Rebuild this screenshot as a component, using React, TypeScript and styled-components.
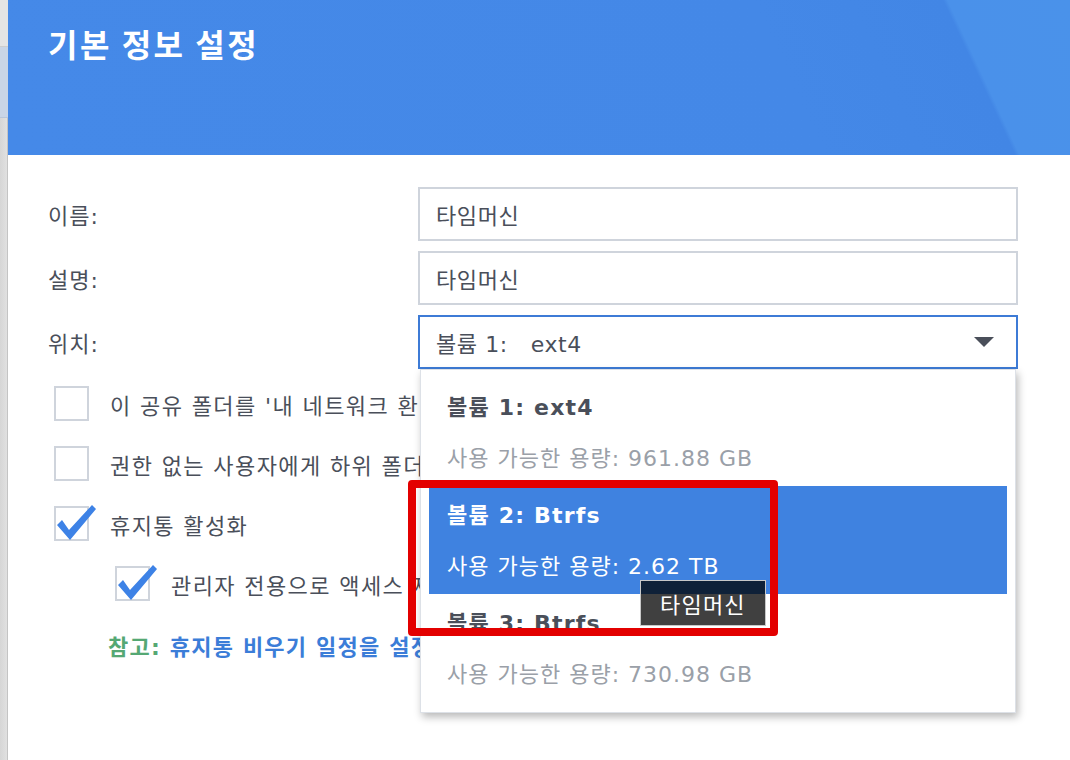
import * as React from 'react';
import styled, { createGlobalStyle } from 'styled-components';

// latin glyphs come from DejaVu (Verdana widths), hangul falls through to Noto CJK
const fontStack = '"DejaVu Sans", "Noto Sans CJK KR", sans-serif';
const titleStack = '"Noto Sans CJK KR", "Noto Sans", sans-serif';
const textColor = '#4a4f5a';
const borderColor = '#cfd4dc';
const blue = '#3f82e0';

const GlobalStyle = createGlobalStyle`
  html, body {
    margin: 0;
    padding: 0;
    background: #ffffff;
  }
  body {
    font-family: ${fontStack};
    color: ${textColor};
    letter-spacing: 1.4px;
  }
`;

const Page = styled.div`
  position: relative;
  display: flex;
  width: 1070px;
  height: 760px;
  overflow: hidden;
`;

// the app window peeking out behind the dialog
const BackStrip = styled.div`
  flex: 0 0 8px;
  display: flex;
  flex-direction: column;
  background: linear-gradient(90deg, #d6d6d6, #e2e2e2);
  box-shadow: inset -1px 0 0 #c4c4c4;
`;

const StripTop = styled.div`
  height: 46px;
  background: #e4e4e4;
  border-bottom: 1px solid #cdcdcd;
`;

const StripTab = styled.div`
  height: 70px;
  background: #c9d5e6;
  border-bottom: 1px solid #b8c6da;
`;

const Dialog = styled.div`
  flex: 1;
  display: flex;
  flex-direction: column;
  background: #ffffff;
`;

const Header = styled.div`
  height: 155px;
  box-sizing: border-box;
  padding: 19px 0 0 40px;
  background: linear-gradient(
    65deg,
    #4589e8 0%,
    #4488e7 72%,
    #4286e5 88.8%,
    #4a91ea 89.2%,
    #4a92ea 100%
  );
`;

const Title = styled.h1`
  margin: 0;
  font-family: ${titleStack};
  font-size: 32px;
  line-height: 48px;
  font-weight: 700;
  color: #ffffff;
  letter-spacing: 2.5px;
`;

const Body = styled.div`
  padding: 32px 52px 0 40px;
`;

const FormGrid = styled.div`
  display: grid;
  grid-template-columns: 370px 600px;
  row-gap: 10px;
  align-items: center;
`;

const Label = styled.div`
  font-size: 22px;
  letter-spacing: 1px;
  color: ${textColor};
`;

const Field = styled.div<{ $focused?: boolean }>`
  position: relative;
  height: 54px;
  box-sizing: border-box;
  display: flex;
  align-items: center;
  padding: 0 16px;
  border: 2px solid ${p => (p.$focused ? '#3d7bd6' : borderColor)};
  background: #ffffff;
  font-size: 22px;
  letter-spacing: 0.6px;
  color: ${textColor};
  white-space: pre;
`;

const Arrow = styled.span`
  margin-left: auto;
  margin-right: 6px;
  width: 0;
  height: 0;
  border-left: 10px solid transparent;
  border-right: 10px solid transparent;
  border-top: 10px solid #4a4f5a;
`;

const Dropdown = styled.div`
  position: absolute;
  top: calc(100% + 2px);
  left: 0;
  width: 596px;
  box-sizing: border-box;
  padding: 8px 8px 10px;
  background: #ffffff;
  border: 1px solid #dde1e7;
  box-shadow: 2px 4px 8px rgba(0, 0, 0, 0.28);
  white-space: normal;
  letter-spacing: 1.2px;
  z-index: 10;
`;

const Option = styled.div<{ $active?: boolean }>`
  position: relative;
  height: 108px;
  box-sizing: border-box;
  padding: 14px 18px 0;
  background: ${p => (p.$active ? blue : 'transparent')};
`;

const OptionTitle = styled.div<{ $active?: boolean }>`
  font-size: 22px;
  font-weight: 700;
  line-height: 32px;
  color: ${p => (p.$active ? '#ffffff' : textColor)};
`;

const OptionSub = styled.div<{ $active?: boolean }>`
  margin-top: 19px;
  font-size: 22px;
  line-height: 32px;
  letter-spacing: 1px;
  color: ${p => (p.$active ? '#ffffff' : '#9aa0a8')};
`;

const Tooltip = styled.div`
  position: absolute;
  left: 211px;
  top: 94px;
  z-index: 2;
  padding: 0 19px;
  height: 46px;
  box-sizing: border-box;
  display: flex;
  align-items: center;
  background: rgba(0, 0, 0, 0.75);
  border: 1px solid #c8c8c8;
  font-size: 22px;
  color: #ffffff;
`;

const Checks = styled.div`
  display: flex;
  flex-direction: column;
  gap: 25px;
  margin: 17px 0 0 6px;
`;

const CheckRow = styled.div<{ $indent?: boolean }>`
  display: flex;
  align-items: center;
  gap: 21px;
  height: 35px;
  margin-left: ${p => (p.$indent ? '61px' : '0')};
  font-size: 22px;
  letter-spacing: 1.4px;
  color: ${textColor};
  white-space: nowrap;
`;

const Box = styled.span`
  position: relative;
  flex: 0 0 35px;
  height: 35px;
  box-sizing: border-box;
  border: 2px solid ${borderColor};
  background: #ffffff;
`;

const Tick = styled.svg`
  position: absolute;
  left: -2px;
  top: -4px;
  overflow: visible;
`;

const Note = styled.div`
  margin: 28px 0 0 60px;
  font-size: 22px;
  font-weight: 700;
  letter-spacing: 1.2px;
  white-space: nowrap;
`;

const NoteLabel = styled.span`
  color: #55a874;
`;

const NoteLink = styled.span`
  color: #3b7dd8;
`;

const Highlight = styled.div`
  position: absolute;
  left: 408px;
  top: 480px;
  width: 370px;
  height: 156px;
  box-sizing: border-box;
  border: 8px solid #e30000;
  border-radius: 4px;
  z-index: 20;
  pointer-events: none;
`;

const CheckBox = ({ checked }: { checked?: boolean }) => (
  <Box>
    {checked && (
      <Tick width="42" height="38" viewBox="0 0 42 38">
        <polygon points="3,21 8,16 15,26 38,1 42,5 16,36" fill="#3d82e6" />
      </Tick>
    )}
  </Box>
);

const volumes = [
  { name: '볼륨 1: ext4', free: '사용 가능한 용량: 961.88 GB' },
  { name: '볼륨 2: Btrfs', free: '사용 가능한 용량: 2.62 TB' },
  { name: '볼륨 3: Btrfs', free: '사용 가능한 용량: 730.98 GB' },
];

export default function App() {
  const active = 1;
  return (
    <>
      <GlobalStyle />
      <Page>
        <BackStrip>
          <StripTop />
          <StripTab />
        </BackStrip>
        <Dialog>
          <Header>
            <Title>기본 정보 설정</Title>
          </Header>
          <Body>
            <FormGrid>
              <Label>이름:</Label>
              <Field>타임머신</Field>
              <Label>설명:</Label>
              <Field>타임머신</Field>
              <Label>위치:</Label>
              <Field $focused>
                {'볼륨 1:   ext4'}
                <Arrow />
                <Dropdown>
                  {volumes.map((v, i) => (
                    <Option key={v.name} $active={i === active}>
                      <OptionTitle $active={i === active}>{v.name}</OptionTitle>
                      <OptionSub $active={i === active}>{v.free}</OptionSub>
                      {i === active && <Tooltip>타임머신</Tooltip>}
                    </Option>
                  ))}
                </Dropdown>
              </Field>
            </FormGrid>
            <Checks>
              <CheckRow>
                <CheckBox />
                이 공유 폴더를 '내 네트워크 환경'에서 숨기기
              </CheckRow>
              <CheckRow>
                <CheckBox />
                권한 없는 사용자에게 하위 폴더 및 파일 숨기기
              </CheckRow>
              <CheckRow>
                <CheckBox checked />
                휴지통 활성화
              </CheckRow>
              <CheckRow $indent>
                <CheckBox checked />
                관리자 전용으로 액세스 제한
              </CheckRow>
            </Checks>
            <Note>
              <NoteLabel>참고: </NoteLabel>
              <NoteLink>휴지통 비우기 일정을 설정하려면 여기를 클릭하십시오.</NoteLink>
            </Note>
          </Body>
        </Dialog>
        <Highlight />
      </Page>
    </>
  );
}
